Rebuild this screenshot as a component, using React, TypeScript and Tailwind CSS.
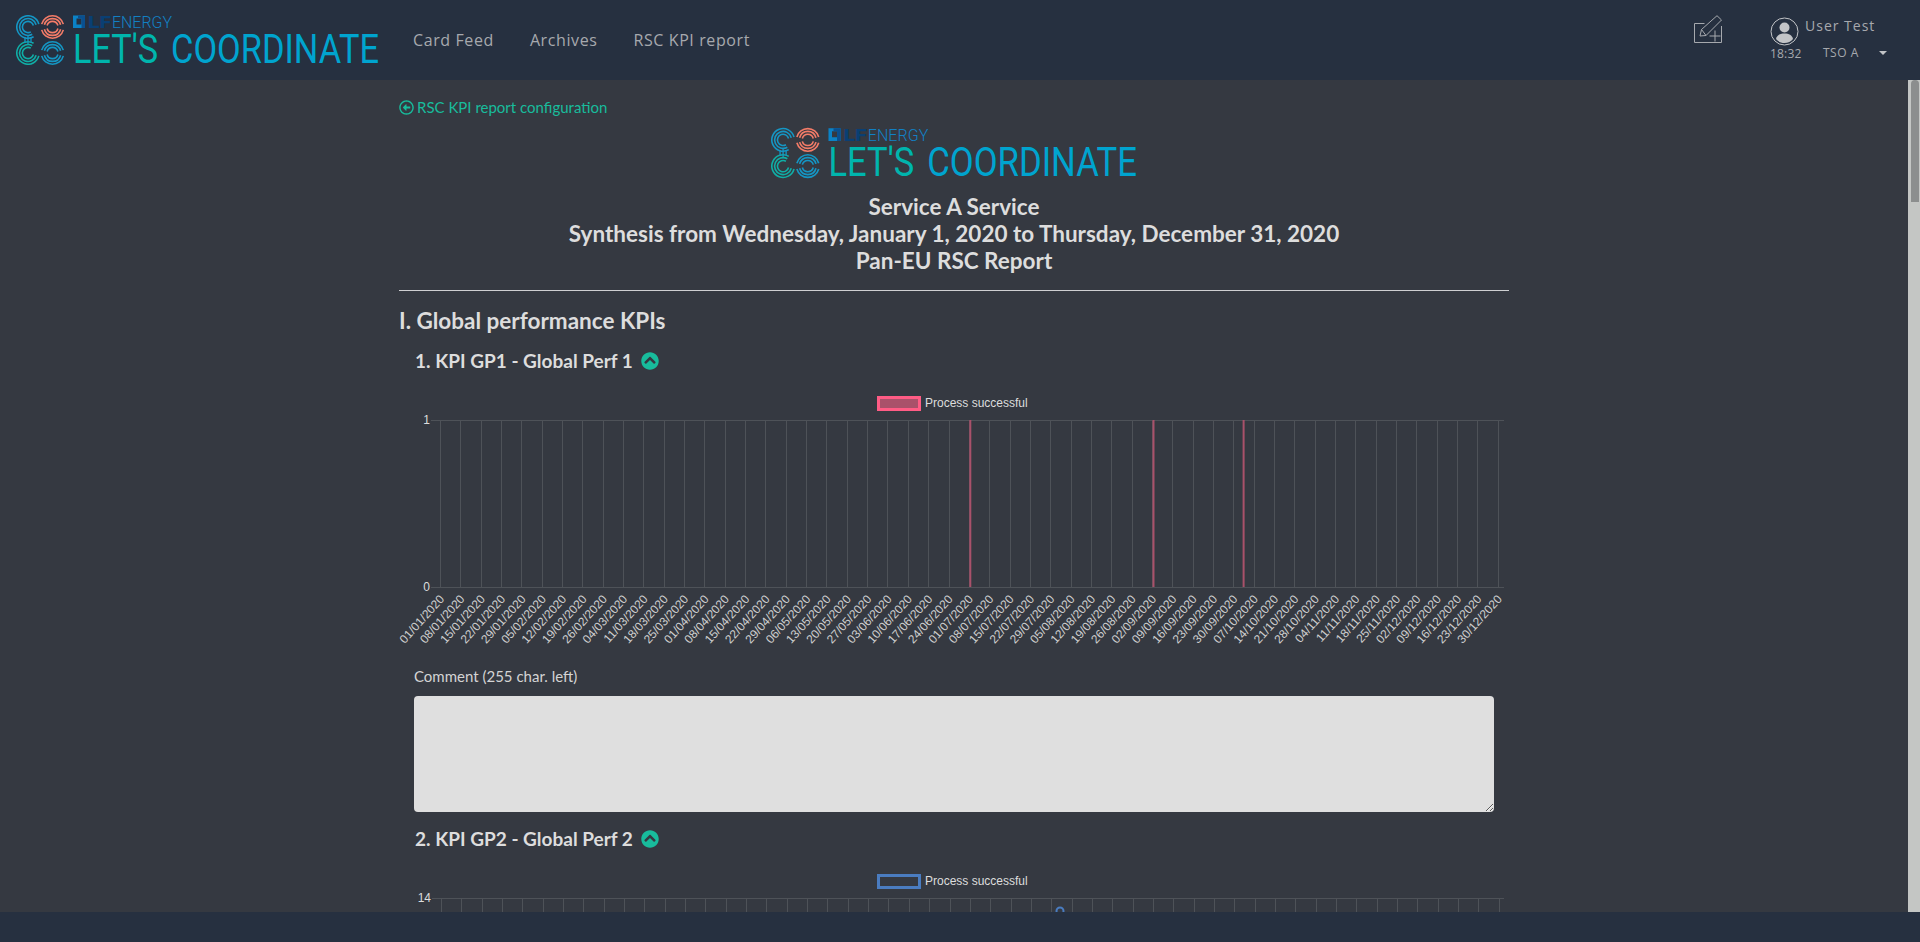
import { FaChevronCircleUp, FaRegArrowAltCircleLeft } from "react-icons/fa";

const LATO = "font-['Lato','Liberation_Sans',sans-serif]";
const OPEN = "font-['Open_Sans','Noto_Sans',sans-serif]";

function arc(cx: number, cy: number, r: number, from: number, to: number): string {
  const rad = (d: number) => (d * Math.PI) / 180;
  const x1 = cx + r * Math.cos(rad(from));
  const y1 = cy + r * Math.sin(rad(from));
  const x2 = cx + r * Math.cos(rad(to));
  const y2 = cy + r * Math.sin(rad(to));
  const large = Math.abs(to - from) > 180 ? 1 : 0;
  return `M${x1} ${y1}A${r} ${r} 0 ${large} 1 ${x2} ${y2}`;
}

const RADII = [11.2, 8.4, 5.6];

function Ring({ cx, cy, color, spans }: { cx: number; cy: number; color: string; spans: number[][] }) {
  return (
    <g fill="none" stroke={color} strokeWidth={1.6}>
      {RADII.map((r) => spans.map(([a, b]) => <path key={`${r}-${a}`} d={arc(cx, cy, r, a, b)} />))}
    </g>
  );
}

function Logo({ className }: { className: string }) {
  return (
    <svg viewBox="0 0 364 50" className={className}>
      <Ring cx={12} cy={12} color="#1596c4" spans={[[60, 345]]} />
      <Ring cx={36.5} cy={12} color="#f47c68" spans={[[195, 345], [15, 165]]} />
      <Ring cx={12} cy={38} color="#10aea6" spans={[[15, 300]]} />
      <Ring cx={36.5} cy={38} color="#1596c4" spans={[[195, 345], [15, 165]]} />
      <path d="M9 22v6M12 21v8M15 22v6" stroke="#1596c4" strokeWidth={1.3} fill="none" />
      <path fillRule="evenodd" d="M57 0.500h12v12.500h-12zM60.500 3.500v6h5v-6z" fill="#0b82c6" />
      <path d="M62 0.500h7v12.500h-3.500v-9.500h-3.500z" fill="#0a4f8f" />
      <text x="72" y="12.800" fontFamily="Roboto, sans-serif" fontWeight={900} fontSize={17} fill="#0a3f73" textLength={23} lengthAdjust="spacingAndGlyphs">
        LF
      </text>
      <text x="96" y="12.800" fontFamily="Roboto, sans-serif" fontWeight={300} fontSize={17} fill="#1280c4" textLength={60} lengthAdjust="spacingAndGlyphs">
        ENERGY
      </text>
      <text x="57" y="48" fontFamily="Roboto, sans-serif" fontSize={40} fill="#00b5ad" textLength={85} lengthAdjust="spacingAndGlyphs">
        LET'S
      </text>
      <text x="155" y="48" fontFamily="Roboto, sans-serif" fontSize={40} fill="#00a4cf" textLength={208} lengthAdjust="spacingAndGlyphs">
        COORDINATE
      </text>
    </svg>
  );
}

function dateLabels(): string[] {
  const labels: string[] = [];
  for (let i = 0; i < 53; i++) {
    const d = new Date(Date.UTC(2020, 0, 1 + i * 7));
    const dd = String(d.getUTCDate()).padStart(2, "0");
    const mm = String(d.getUTCMonth() + 1).padStart(2, "0");
    labels.push(`${dd}/${mm}/2020`);
  }
  return labels;
}

interface ChartProps {
  left: number;
  maxLabel: string;
  legendFill: string;
  legendStroke: string;
  bars?: number[];
  barColor?: string;
  point?: number;
}

function Chart({ left, maxLabel, legendFill, legendStroke, bars = [], barColor, point }: ChartProps) {
  const top = 35;
  const bottom = 202;
  const right = 1105;
  const step = 20.34;
  const labels = dateLabels();
  const grid = "#4e5258";
  return (
    <svg width={1110} height={265} className="block" fontFamily="'Liberation Sans', Arial, sans-serif" fontSize={12}>
      <rect x={479.5} y={12.5} width={41} height={12} fill={legendFill} stroke={legendStroke} strokeWidth={3} />
      <text x={526} y={22} fill="#dddddd">
        Process successful
      </text>
      <path d={`M${left - 9} ${top + 0.5}H${right}M${left - 9} ${bottom + 0.5}H${right}`} stroke={grid} fill="none" />
      {labels.map((l, i) => {
        const x = Math.round(left + i * step) + 0.5;
        return <path key={l} d={`M${x} ${top}V${bottom}`} stroke={grid} fill="none" />;
      })}
      {bars.map((x) => (
        <rect key={x} x={x} y={top} width={2} height={bottom - top} fill={barColor} />
      ))}
      {point !== undefined && <circle cx={point} cy={48} r={3.5} fill="none" stroke="#4a7cc0" strokeWidth={2} />}
      <text x={left - 10} y={top + 4} textAnchor="end" fill="#dddddd">
        {maxLabel}
      </text>
      <text x={left - 10} y={bottom + 4} textAnchor="end" fill="#dddddd">
        0
      </text>
      {labels.map((l, i) => (
        <text
          key={l}
          transform={`translate(${left + i * step + 5} ${bottom + 12.5}) rotate(-48)`}
          textAnchor="end"
          fill="#cfcfcf"
        >
          {l}
        </text>
      ))}
    </svg>
  );
}

function SubHeading({ children }: { children: string }) {
  return (
    <div className="flex h-[26px] items-center pl-4 text-[19px] font-bold leading-[26px] text-[#dddddd]">
      <span>{children}</span>
      <FaChevronCircleUp className="ml-2 text-[18px] text-[#18bc9c]" />
    </div>
  );
}

function CreateCardIcon() {
  return (
    <svg width={28} height={28} viewBox="0 0 28 28" fill="none" stroke="#a6a9ae" strokeWidth={1} className="block">
      <path d="M10.500 8.500H0.500v19h27V11" />
      <path d="M6 21l1.500-6.500L23 0.700l4.500 4.300L12 20.500z" />
      <path d="M7.500 14.500l4.500 6" />
      <path d="M21 15.500v11M15.500 21h11" />
    </svg>
  );
}

function UserIcon() {
  return (
    <svg width={29} height={29} viewBox="0 0 29 29" className="block">
      <circle cx={14.5} cy={14.5} r={13.5} fill="none" stroke="#c2c4c7" strokeWidth={1} />
      <circle cx={14.5} cy={10.5} r={5} fill="#c2c4c7" />
      <path d="M6 22c1-4 4-5.500 8.500-5.500S22 18 23 22c-2 2.500-5 4-8.500 4S8 24.500 6 22z" fill="#c2c4c7" />
    </svg>
  );
}

export default function App() {
  return (
    <div className={`flex h-[942px] flex-col overflow-hidden bg-[#353941] ${LATO}`}>
      <header className="flex h-20 shrink-0 items-center bg-[#263040]">
        <Logo className="ml-4 h-[50px] w-[364px] shrink-0" />
        <nav className={`ml-[33px] flex gap-9 text-[16px] tracking-[0.6px] text-[#a6a9ae] ${OPEN}`}>
          <span>Card Feed</span>
          <span>Archives</span>
          <span>RSC KPI report</span>
        </nav>
        <div className={`ml-auto mt-[15px] flex items-start self-start text-[#a6a9ae] ${OPEN}`}>
          <CreateCardIcon />
          <div className="ml-12 mt-[2px] w-[30px]">
            <UserIcon />
            <div className="text-[12px] leading-4 tracking-[0.2px]">18:32</div>
          </div>
          <div className="ml-[5px] mt-[1px] w-[115px]">
            <div className="text-[14px] leading-5 tracking-[1px]">User Test</div>
            <div className="mt-[7px] flex items-center pl-[18px] text-[12px] leading-5 tracking-[0.5px]">
              <span>TSO A</span>
              <span className="ml-5 border-x-[4px] border-t-[4px] border-x-transparent border-t-[#c2c4c7]" />
            </div>
          </div>
        </div>
      </header>

      <div className="flex min-h-0 flex-1">
        <main className="min-w-0 flex-1 overflow-hidden">
          <div className="mx-auto w-[1110px]">
            <a className="mt-[15px] flex h-6 items-center gap-[3px] text-[15px] text-[#18bc9c]">
              <FaRegArrowAltCircleLeft className="text-[15px]" />
              RSC KPI report configuration
            </a>
            <Logo className="ml-[372px] mt-2 h-[52px] w-[367px]" />
            <h1 className="mt-[14px] text-center text-[22.5px] font-bold leading-[27px] text-[#dddddd]">
              Service A Service
              <br />
              Synthesis from Wednesday, January 1, 2020 to Thursday, December 31, 2020
              <br />
              Pan-EU RSC Report
            </h1>
            <hr className="mt-4 border-t border-[#cfd0d2]" />
            <h2 className="mt-[15px] text-[22.5px] font-bold leading-[30px] text-[#dddddd]">I. Global performance KPIs</h2>
            <div className="mt-3">
              <SubHeading>1. KPI GP1 - Global Perf 1</SubHeading>
            </div>
            <div className="mt-[11px]">
              <Chart left={41} maxLabel="1" legendFill="#a9516a" legendStroke="#ff5c85" bars={[570.3, 753.5, 843.6]} barColor="#a9516a" />
            </div>
            <label className="mt-[14px] block pl-[15px] text-[15px] leading-6 text-[#d4d4d4]">Comment (255 char. left)</label>
            <div className="mt-2 pl-[15px]">
              <textarea className="block h-[116px] w-[1080px] resize-y rounded bg-[#dfdfdf] outline-none" />
            </div>
            <div className="mt-[14px]">
              <SubHeading>2. KPI GP2 - Global Perf 2</SubHeading>
            </div>
            <div className="mt-[11px]">
              <Chart left={42} maxLabel="14" legendFill="transparent" legendStroke="#4a7cc0" point={661} />
            </div>
          </div>
        </main>
        <div className="w-3 shrink-0 bg-[#c4c6c4] pl-[3px] pr-[1px]">
          <div className="h-[122px] rounded-t-md bg-[#8c8e8e]" />
        </div>
      </div>

      <footer className="h-[30px] shrink-0 bg-[#263040]" />
    </div>
  );
}
